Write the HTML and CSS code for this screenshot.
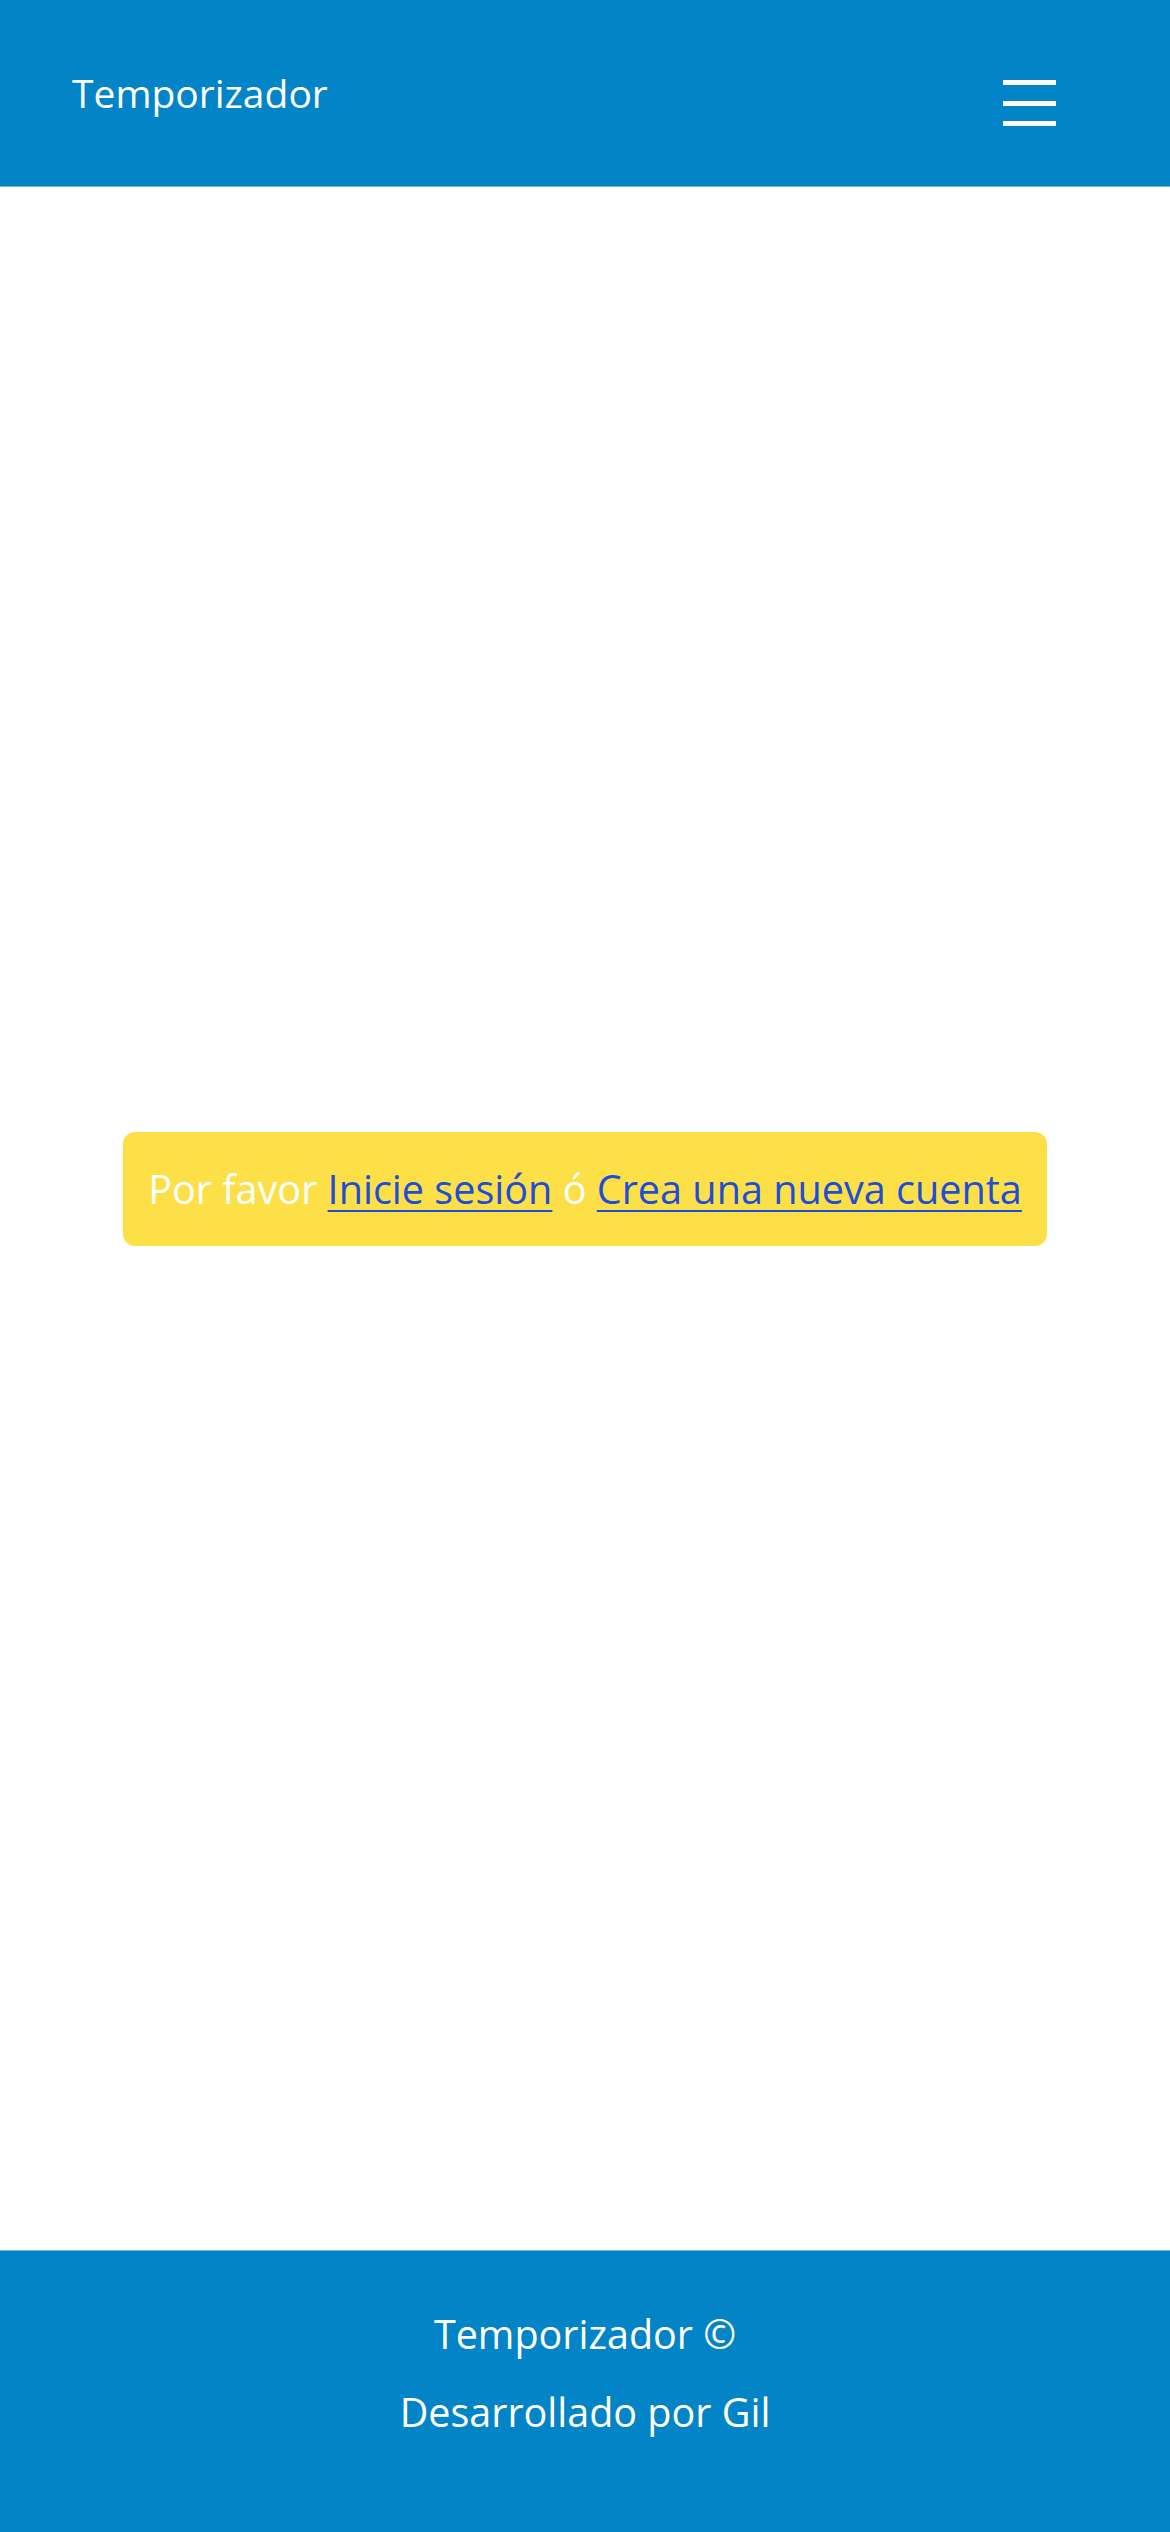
FILE: index.html
```html
<!DOCTYPE html>
<html lang="es">
<head>
<meta charset="utf-8">
<title>Temporizador</title>
<link rel="stylesheet" href="styles.css">
</head>
<body>
<div class="page">
  <header class="topbar">
    <a class="brand" href="#">Temporizador</a>
    <button class="menu-btn" aria-label="Menú">
      <span class="bar"></span>
      <span class="bar"></span>
      <span class="bar"></span>
    </button>
  </header>
  <main class="content">
    <div class="alert">Por favor <a href="#">Inicie sesión</a> ó <a href="#">Crea una nueva cuenta</a></div>
  </main>
  <footer class="footer">
    <p class="footer-line">Temporizador ©</p>
    <p class="footer-line">Desarrollado por Gil</p>
  </footer>
</div>
</body>
</html>
```

FILE: styles.css
```css
html, body {
  margin: 0;
  padding: 0;
}
body {
  font-family: "Open Sans", "Noto Sans", sans-serif;
  font-weight: 400;
  color: #fff;
  background: #fff;
}
.page {
  display: flex;
  flex-direction: column;
  min-height: 2532px;
}
.topbar {
  height: 187px;
  box-sizing: border-box;
  background: #0284c7;
  border-bottom: 1px solid #6cb8e0;
  display: flex;
  align-items: center;
  justify-content: space-between;
  padding: 0 114px 0 72px;
}
.brand {
  color: #fff;
  text-decoration: none;
  font-size: 39px;
  margin-top: -2px;
}
.menu-btn {
  background: none;
  border: 0;
  padding: 0;
  width: 53px;
  display: flex;
  flex-direction: column;
  gap: 15.5px;
  margin-top: 20px;
}
.bar {
  display: block;
  height: 5px;
  background: #fff;
}
.content {
  flex: 1;
  display: flex;
  align-items: center;
  justify-content: center;
  padding-bottom: 59px;
}
.alert {
  background: #fde047;
  border-radius: 12px;
  width: 924px;
  height: 114px;
  box-sizing: border-box;
  padding: 0 20px;
  display: flex;
  align-items: center;
  justify-content: center;
  white-space: pre;
  font-size: 39.6px;
  color: #fff;
}
.alert a {
  color: #1d4ed8;
  text-decoration: underline;
  text-decoration-thickness: 2px;
  text-underline-offset: 6px;
}
.footer {
  height: 282px;
  box-sizing: border-box;
  background: #0284c7;
  border-top: 1px solid #6cb8e0;
  display: flex;
  flex-direction: column;
  align-items: center;
  padding-top: 44px;
}
.footer-line {
  margin: 0;
  font-size: 39.5px;
  line-height: 78px;
}
```
